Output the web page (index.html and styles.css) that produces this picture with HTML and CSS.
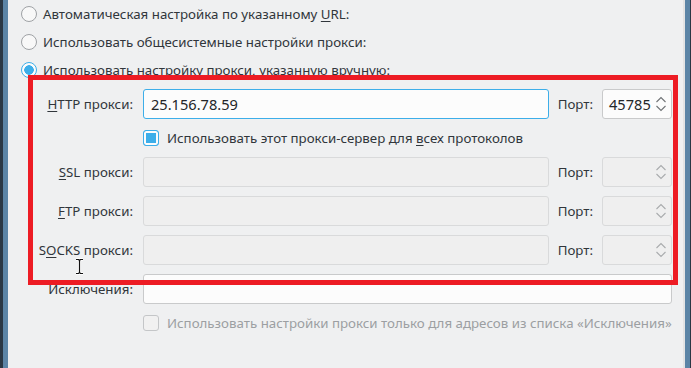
FILE: index.html
```html
<!DOCTYPE html>
<html lang="ru">
<head>
  <meta charset="UTF-8">
  <title>Настройки прокси</title>
  <link rel="stylesheet" href="styles.css">
</head>
<body>
<div class="window">
  <div class="frame-left"></div>

  <div class="page">
    <!-- proxy mode -->
    <div class="radio-list">
      <label class="radio-row"><span class="radio"></span><span>Автоматическая настройка по указанному <u>U</u>RL:</span></label>
      <label class="radio-row"><span class="radio"></span><span>Использовать общесистемные настройки прокси:</span></label>
      <label class="radio-row"><span class="radio checked"></span><span>Использовать настройку прокси, указанную вручную:</span></label>
    </div>

    <!-- manual settings -->
    <div class="proxy-grid">
      <div class="field-label"><u>H</u>TTP прокси:</div>
      <div class="field focus">25.156.78.59</div>
      <div class="port-label">Порт:</div>
      <div class="spin">45785
        <svg class="spin-arrows" width="12" height="18" viewBox="0 0 12 18"><path d="M1.5 7 L6 2.5 L10.5 7 M1.5 11 L6 15.5 L10.5 11" fill="none" stroke="#6f7275" stroke-width="1.1"/></svg>
      </div>

      <label class="check-row wide"><span class="check checked"></span><span>Использовать этот прокси-сервер для <u>в</u>сех протоколов</span></label>

      <div class="field-label"><u>S</u>SL прокси:</div>
      <div class="field disabled"></div>
      <div class="port-label">Порт:</div>
      <div class="spin disabled">
        <svg class="spin-arrows" width="12" height="18" viewBox="0 0 12 18"><path d="M1.5 7 L6 2.5 L10.5 7 M1.5 11 L6 15.5 L10.5 11" fill="none" stroke="#a9abad" stroke-width="1.1"/></svg>
      </div>

      <div class="field-label"><u>F</u>TP прокси:</div>
      <div class="field disabled"></div>
      <div class="port-label">Порт:</div>
      <div class="spin disabled">
        <svg class="spin-arrows" width="12" height="18" viewBox="0 0 12 18"><path d="M1.5 7 L6 2.5 L10.5 7 M1.5 11 L6 15.5 L10.5 11" fill="none" stroke="#a9abad" stroke-width="1.1"/></svg>
      </div>

      <div class="field-label">S<u>O</u>CKS прокси:</div>
      <div class="field disabled"></div>
      <div class="port-label">Порт:</div>
      <div class="spin disabled">
        <svg class="spin-arrows" width="12" height="18" viewBox="0 0 12 18"><path d="M1.5 7 L6 2.5 L10.5 7 M1.5 11 L6 15.5 L10.5 11" fill="none" stroke="#a9abad" stroke-width="1.1"/></svg>
      </div>

      <div class="field-label">Исключения:</div>
      <div class="field wide"></div>

      <label class="check-row wide muted"><span class="check off"></span><span>Использовать настройки прокси только для адресов из списка «Исключения»</span></label>
    </div>

    <!-- red annotation frame over the form -->
    <div class="annotation"></div>

    <!-- text cursor -->
    <svg class="ibeam" width="9" height="17" viewBox="0 0 9 17">
      <path d="M1 1.5 H3.5 L4.5 2.5 L5.5 1.5 H8 M4.5 2.5 V14.5 M1 15.5 H3.5 L4.5 14.5 L5.5 15.5 H8" fill="none" stroke="#fff" stroke-width="3"/>
      <path d="M1 1.5 H3.5 L4.5 2.5 L5.5 1.5 H8 M4.5 2.5 V14.5 M1 15.5 H3.5 L4.5 14.5 L5.5 15.5 H8" fill="none" stroke="#111" stroke-width="1.2"/>
    </svg>
  </div>

  <div class="frame-right"></div>
</div>
</body>
</html>
```

FILE: styles.css
```css
* {
  margin: 0;
  padding: 0;
  box-sizing: border-box;
}

body {
  font-family: 'Noto Sans', sans-serif;
  font-size: 13.3px;
  color: #31363b;
  background: #eff0f1;
}

u {
  text-decoration: underline;
  text-underline-offset: 2px;
}

.window {
  display: flex;
  width: 691px;
  height: 368px;
  overflow: hidden;
}

.frame-left {
  width: 8px;
  border-left: 3px solid #2a3744;
  background: #5b84a6;
}

.frame-right {
  width: 8px;
  border-left: 2px solid #e2e3e4;
  border-right: 1px solid #2a3744;
  background: #5b84a6;
}

.page {
  flex: 1;
  position: relative;
  background: #eff0f1;
}

/* radios */
.radio-list {
  padding-left: 13px;
}

.radio-row {
  display: flex;
  align-items: center;
  height: 28px;
  gap: 6px;
}

.radio {
  width: 16px;
  height: 16px;
  border-radius: 50%;
  border: 1px solid #9fa2a5;
  background: #f8f8f8;
  flex: none;
}

.radio.checked {
  border-color: #3daee9;
  background: radial-gradient(circle, #3daee9 0 4.5px, #fcfcfc 5px);
}

/* grid with proxy fields */
.proxy-grid {
  margin-top: 5px;
  margin-right: 11px;
  display: grid;
  grid-template-columns: 126px 1fr auto 70px;
  grid-template-rows: 30px 20px 30px 30px 30px 30px 20px;
  column-gap: 9px;
  row-gap: 9px;
  align-items: center;
}

.field-label {
  text-align: right;
  padding-right: 1px;
}

.field {
  height: 30px;
  border: 1px solid #c9cacb;
  border-radius: 3px;
  background: #fcfcfc;
  padding-left: 7px;
  font-size: 14.6px;
  line-height: 28px;
  color: #232629;
}

.field.focus {
  border-color: #3daee9;
}

.field.disabled {
  background: #efefef;
  border-color: #d9dadb;
}

.wide {
  grid-column: 2 / 5;
}

.port-label {
  white-space: nowrap;
}

.spin {
  height: 30px;
  border: 1px solid #c9cacb;
  border-radius: 3px;
  background: #fcfcfc;
  display: flex;
  align-items: center;
  justify-content: space-between;
  padding: 0 4px 0 6px;
  font-size: 14.6px;
  color: #232629;
}

.spin.disabled {
  background: #efefef;
  border-color: #d9dadb;
  justify-content: flex-end;
}

.check-row {
  display: flex;
  align-items: center;
  gap: 8px;
  height: 20px;
}

.check {
  width: 16px;
  height: 16px;
  border-radius: 3px;
  flex: none;
}

.check.checked {
  border: 1px solid #3daee9;
  background: #3daee9;
  box-shadow: inset 0 0 0 2px #fcfcfc;
}

.check.off {
  border: 1px solid #c4c6c8;
  background: #f1f1f1;
}

.muted {
  color: #9c9fa2;
}

/* overlays */
.annotation {
  position: absolute;
  left: 20px;
  top: 75px;
  width: 650px;
  height: 210px;
  border: 5px solid #ed1c24;
}

.ibeam {
  position: absolute;
  left: 67px;
  top: 258px;
}
```
